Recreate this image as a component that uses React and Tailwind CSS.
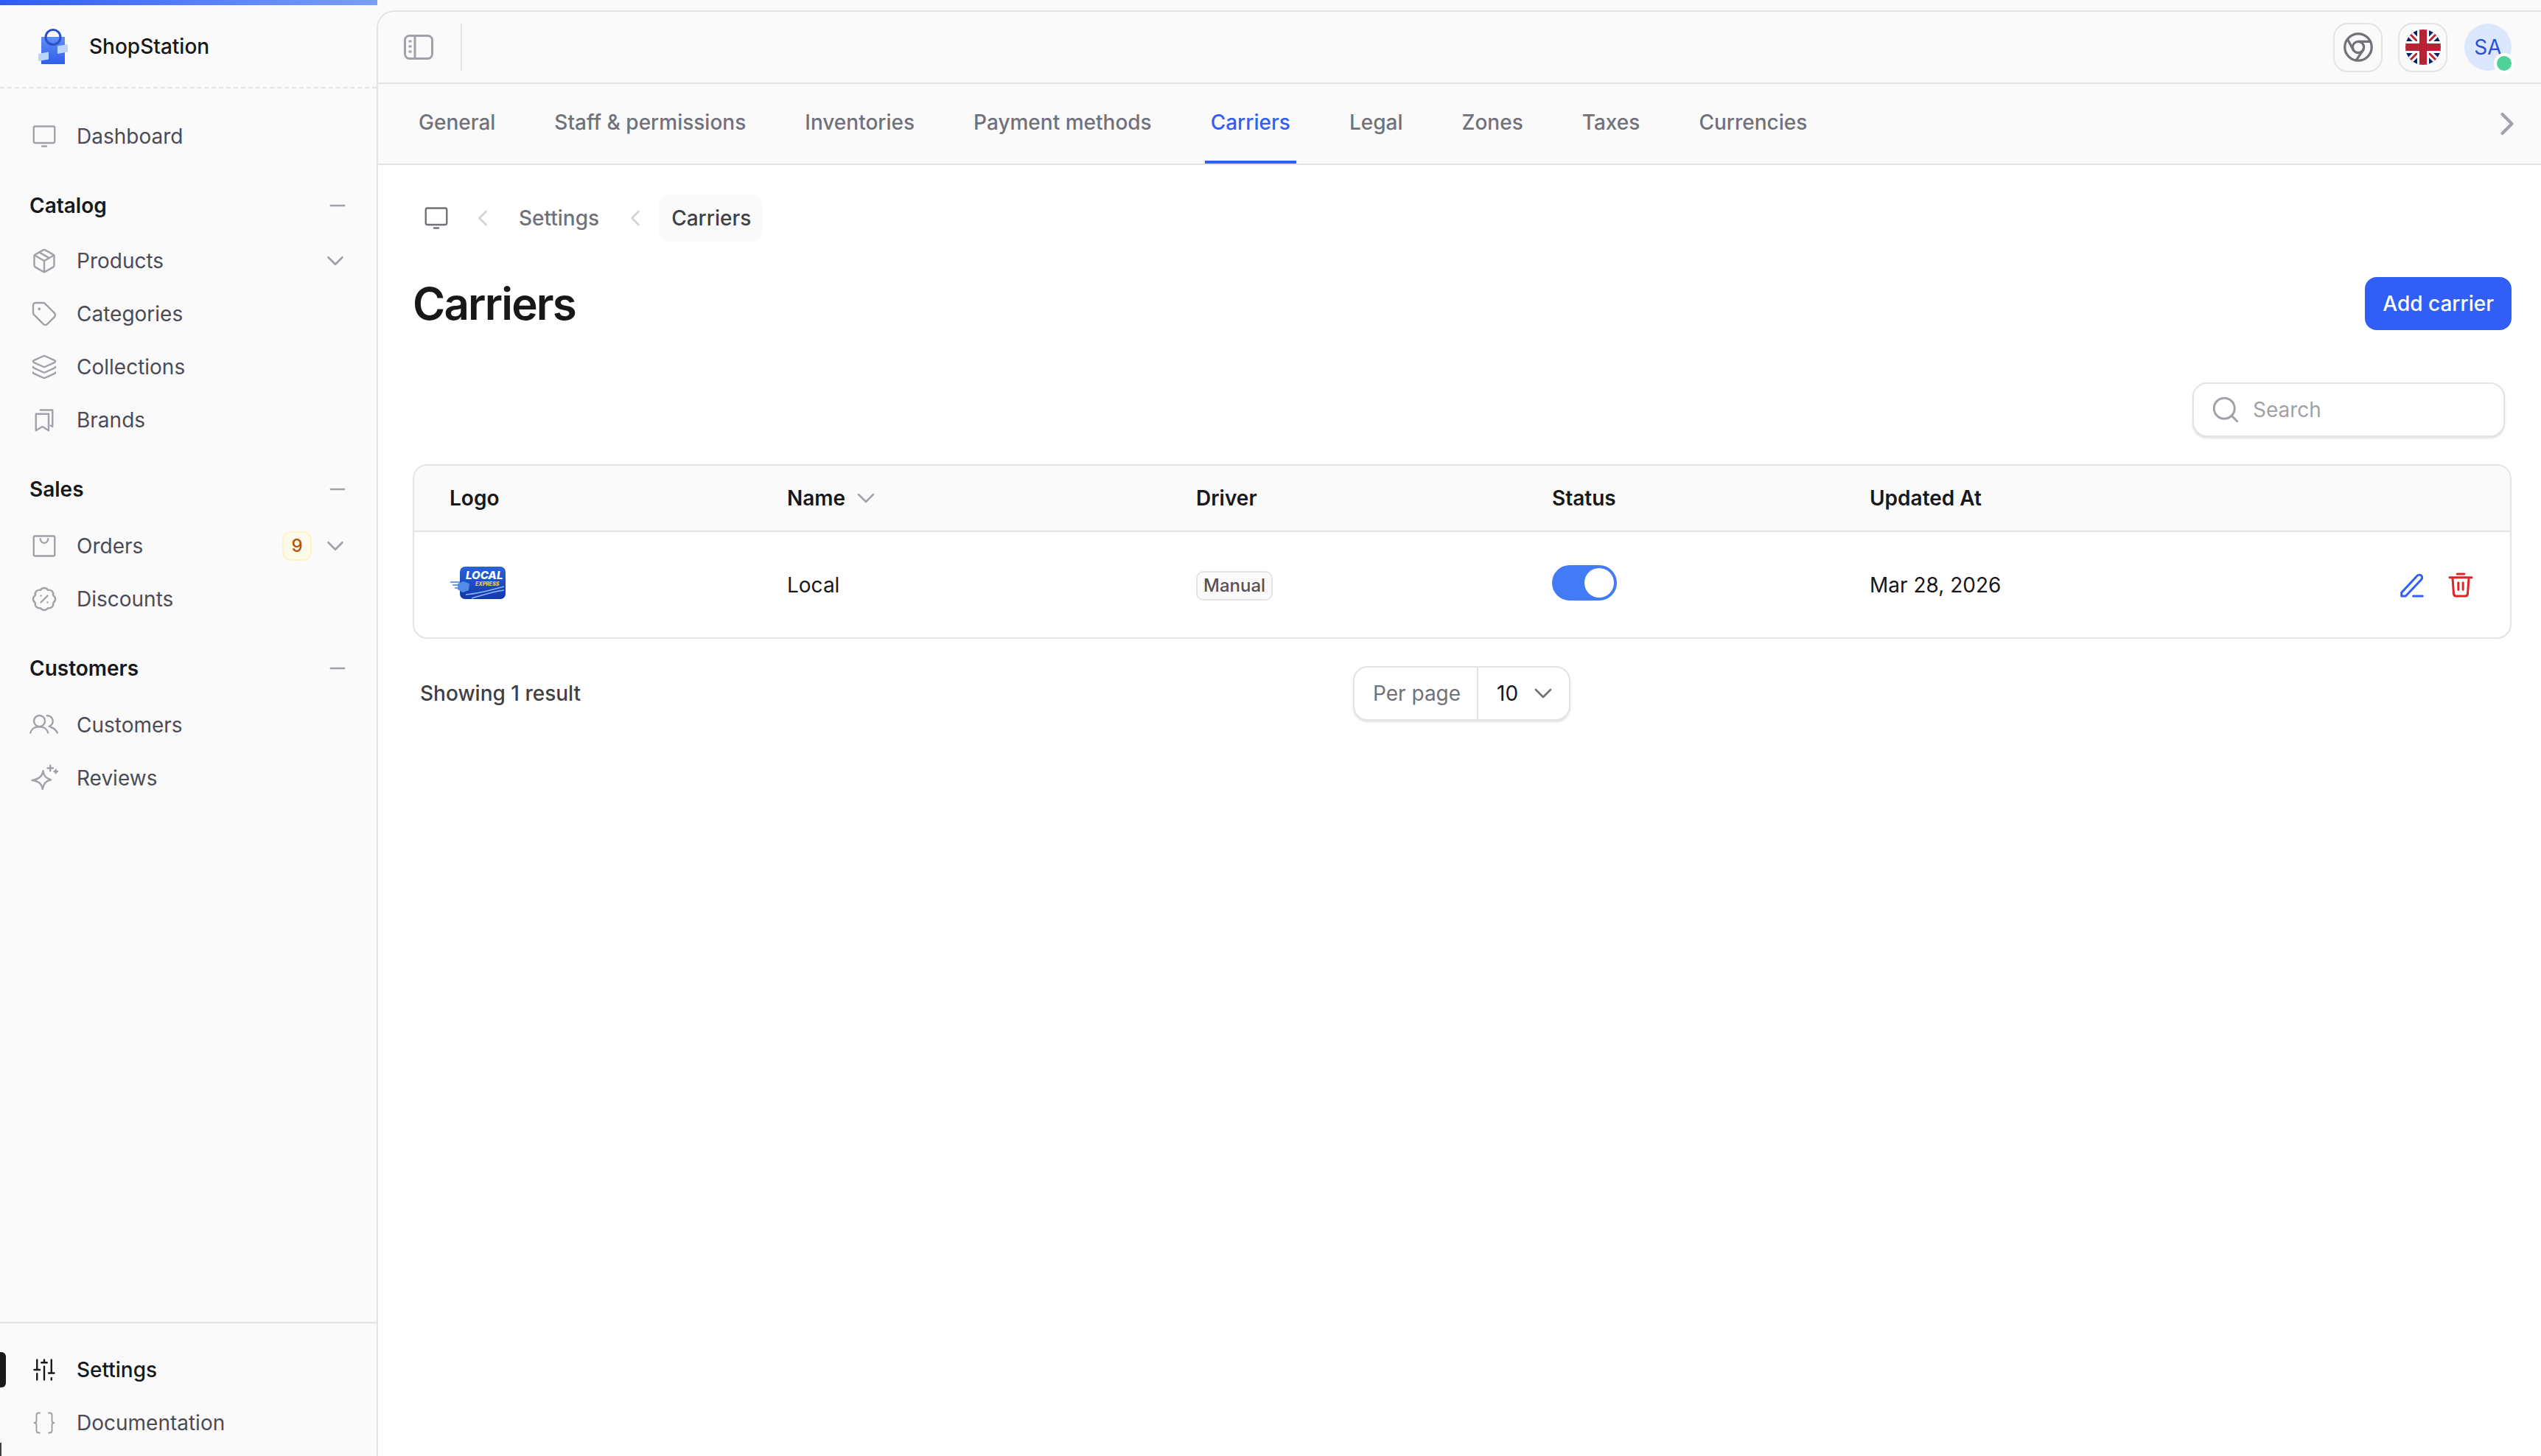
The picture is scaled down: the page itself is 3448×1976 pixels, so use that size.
import { ChevronDown, ChevronLeft, ChevronRight, Minus, Package, Tag, Layers, BadgePercent, Braces, Search } from 'lucide-react';

const TABS = ['General', 'Staff & permissions', 'Inventories', 'Payment methods', 'Carriers', 'Legal', 'Zones', 'Taxes', 'Currencies'];

function Svg({ className = 'w-[36px] h-[36px] text-[#a1a1aa]', width = 1.6, children }) {
  return (
    <svg viewBox="0 0 24 24" fill="none" stroke="currentColor" strokeWidth={width} strokeLinecap="round" strokeLinejoin="round" className={`shrink-0 overflow-visible ${className}`}>
      {children}
    </svg>
  );
}

const MonitorIcon = (props) => (
  <Svg {...props}>
    <rect x="2.5" y="3" width="19" height="15" rx="1.5" />
    <path d="M10 21h4" />
  </Svg>
);

const BookmarksIcon = (props) => (
  <Svg {...props}>
    <path d="M4.500 6.500h11.500v15l-5.700-3.500-5.800 3.500z" />
    <path d="M8.500 3h11v15l-1.800-1" />
  </Svg>
);

const BagIcon = (props) => (
  <Svg {...props}>
    <rect x="2.500" y="3" width="19" height="18" rx="1" />
    <path d="M8.500 5.500c.5 5 6.500 5 7 0" />
  </Svg>
);

const PeopleIcon = (props) => (
  <Svg {...props}>
    <circle cx="7.700" cy="8.300" r="5" />
    <path d="M-.5 19c.8-3.500 4-5.500 8-5.500s7.200 2 8 5.500" />
    <path d="M14.500 3.500a5 5 0 0 1 2 9.700" />
    <path d="M18 14c2.500.5 4.500 2.500 6 5" />
  </Svg>
);

const SparkIcon = (props) => (
  <Svg {...props}>
    <path d="M11 5.500c.6 4.500 2.400 6.500 7 8-4.600 1.200-6.400 3.200-7.500 8.500-.8-5-3.200-7-9.500-8 6.300-1.200 9.200-3.500 10-8.500z" />
    <path d="M17.500.5v5M15 3h5M22.500 4.500v3M21 6h3" />
  </Svg>
);

const SlidersIcon = (props) => (
  <Svg {...props}>
    <path d="M5.500 3v9M3 12h5M5.500 15.500V21M12 3v2.500M9.500 5.500h5M12 9v12M18.500 3v12M16 15h5M18.500 19.500V21" />
  </Svg>
);

function NavItem({ icon, label, badge, chevron, active }) {
  return (
    <div className={`relative flex items-center h-[72px] pl-[42px] pr-[37px] gap-[26px] text-[28px] ${active ? 'font-medium text-[#18181b]' : 'font-normal text-[#4b4b55]'}`}>
      {active && <span className="absolute left-0 top-[12px] w-[8px] h-[48px] rounded-r-[6px] bg-[#18181b]" />}
      {icon}
      <span className="flex-1">{label}</span>
      {badge && (
        <span className="w-[40px] h-[40px] -mr-[13px] flex items-center justify-center rounded-[12px] border-2 border-[#fef3c7] bg-[#fffbeb] text-[24px] font-medium text-[#b45309]">{badge}</span>
      )}
      {chevron && <ChevronDown className="w-[38px] h-[38px] text-[#a1a1aa]" strokeWidth={1.7} />}
    </div>
  );
}

function NavSection({ title, gap = 'mt-[19px]', children }) {
  return (
    <div className="mt-[36px]">
      <div className="flex items-center justify-between h-[44px] pl-[40px] pr-[37px] text-[28px] font-semibold text-[#18181b]">
        {title}
        <Minus className="w-[32px] h-[32px] text-[#a1a1aa]" strokeWidth={1.7} />
      </div>
      <div className={gap}>{children}</div>
    </div>
  );
}

function Sidebar() {
  const ic = 'w-[36px] h-[36px] text-[#a1a1aa]';
  return (
    <aside className="w-[511px] shrink-0 flex flex-col h-full">
      <div className="w-[512px] h-[7px] shrink-0 bg-gradient-to-r from-[#2f5cf0] to-[#7c9dfb]" />
      <div className="h-[113px] shrink-0 flex items-center gap-[27px] pl-[50px] border-b-2 border-dashed border-[#e4e4e7]">
        <svg viewBox="50 38 44 52" className="w-[44px] h-[52px] shrink-0">
          <defs>
            <linearGradient id="bag" x1="0" y1="0" x2="0" y2="1">
              <stop offset="0" stopColor="#5f90f8" />
              <stop offset="1" stopColor="#2e5de8" />
            </linearGradient>
          </defs>
          <rect x="56" y="51" width="32" height="37" fill="url(#bag)" />
          <circle cx="72" cy="51.500" r="10" fill="none" stroke="#2f4fc9" strokeWidth="3" />
          <path d="M78 63.500l14-2.500v10.500l-14 2.500z" fill="#bcd3fb" />
          <path d="M52 74l14-2.500v10l-14 2.500z" fill="#bcd3fb" />
        </svg>
        <span className="text-[28px] font-medium text-[#18181b]">ShopStation</span>
      </div>
      <div className="mt-[29px]">
        <NavItem icon={<MonitorIcon />} label="Dashboard" />
      </div>
      <NavSection title="Catalog" gap="mt-[17px]">
        <NavItem icon={<Package className={ic} strokeWidth={1.6} />} label="Products" chevron />
        <NavItem icon={<Tag className={ic} strokeWidth={1.6} />} label="Categories" />
        <NavItem icon={<Layers className={ic} strokeWidth={1.6} />} label="Collections" />
        <NavItem icon={<BookmarksIcon />} label="Brands" />
      </NavSection>
      <NavSection title="Sales">
        <NavItem icon={<BagIcon />} label="Orders" badge="9" chevron />
        <NavItem icon={<BadgePercent className={ic} strokeWidth={1.6} />} label="Discounts" />
      </NavSection>
      <NavSection title="Customers">
        <NavItem icon={<PeopleIcon />} label="Customers" />
        <NavItem icon={<SparkIcon />} label="Reviews" />
      </NavSection>
      <div className="mt-auto border-t-2 border-[#e4e4e7] pt-[27px] pb-[9px]">
        <NavItem active icon={<SlidersIcon className="w-[36px] h-[36px] text-[#18181b]" />} label="Settings" />
        <NavItem icon={<Braces className={ic} strokeWidth={1.3} />} label="Documentation" />
      </div>
    </aside>
  );
}

function FlagIcon() {
  return (
    <svg viewBox="0 0 48 48" className="w-[48px] h-[48px] rounded-full">
      <rect width="48" height="48" fill="#012169" />
      <path d="M0 0L48 48M48 0L0 48" stroke="#fff" strokeWidth="9" />
      <path d="M0 0L48 48M48 0L0 48" stroke="#b92234" strokeWidth="3" />
      <path d="M24 0V48M0 24H48" stroke="#fff" strokeWidth="16" />
      <path d="M24 0V48M0 24H48" stroke="#b92234" strokeWidth="10" />
    </svg>
  );
}

function Topbar() {
  return (
    <div className="h-[98px] shrink-0 flex items-center bg-[#fafafb] border-b-2 border-[#e4e4e7] pl-[35px] pr-[40px]">
      <svg viewBox="0 0 40 34" fill="none" className="w-[40px] h-[34px] text-[#a1a1aa]" stroke="currentColor" strokeWidth="3">
        <rect x="1.500" y="1.500" width="37" height="31" rx="6" />
        <path d="M15 1.500v31" />
        <path d="M6.500 9h4M6.500 16h4M6.500 23h4" />
      </svg>
      <div className="ml-[37px] w-[2px] h-[64px] bg-[#e4e4e7]" />
      <div className="ml-auto flex items-center gap-[21px]">
        <div className="w-[67px] h-[67px] flex items-center justify-center rounded-[20px] border-2 border-[#e4e4e7]">
          <Svg className="w-[46px] h-[46px] text-[#71717a]" width={1.7}>
            <circle cx="12" cy="12" r="9.500" />
            <circle cx="12" cy="12" r="4" />
            <path d="M20.500 8H12M4.500 6.500L8.500 14M10.500 21.300L15.500 14" />
          </Svg>
        </div>
        <div className="w-[67px] h-[67px] flex items-center justify-center rounded-[20px] border-2 border-[#e4e4e7]">
          <FlagIcon />
        </div>
        <div className="relative w-[64px] h-[64px] ml-[2px] flex items-center justify-center rounded-full bg-[#dbe7fd] text-[28px] text-[#2b4fd9]">
          SA
          <span className="absolute -right-[4px] -bottom-[4px] w-[28px] h-[28px] rounded-full border-4 border-white bg-[#4fd19a]" />
        </div>
      </div>
    </div>
  );
}

function Tabs() {
  return (
    <div className="h-[110px] shrink-0 flex items-stretch border-b-2 border-[#e4e4e7] pl-[47px] pr-[36px]">
      <div className="flex gap-[64px]">
        {TABS.map((t) => (
          <div
            key={t}
            className={`flex items-center px-[8px] border-b-4 text-[28px] font-medium ${t === 'Carriers' ? 'border-b-[#315ff5] text-[#315ff5]' : 'border-b-transparent text-[#71717a]'}`}
          >
            {t}
          </div>
        ))}
      </div>
      <ChevronRight className="ml-auto self-center w-[52px] h-[52px] -mr-[16px] text-[#a1a1aa]" strokeWidth={1.9} />
    </div>
  );
}

function CarrierLogo() {
  return (
    <svg viewBox="0 0 78 46" className="w-[78px] h-[46px]">
      <defs>
        <linearGradient id="lg" x1="0" y1="0" x2="0" y2="1">
          <stop offset="0" stopColor="#2a62d8" />
          <stop offset="1" stopColor="#1238ad" />
        </linearGradient>
      </defs>
      <path d="M1 22h16M4 26h14M7 30h12" stroke="#6d9bf0" strokeWidth="2" />
      <rect x="14" y="1" width="62" height="44" rx="7" fill="url(#lg)" />
      <text x="22" y="18" fill="#fff" fontSize="15" fontWeight="800" fontStyle="italic" fontFamily="Inter, sans-serif">LOCAL</text>
      <text x="35" y="27" fill="#f0cd4a" fontSize="7" fontWeight="800" fontStyle="italic" fontFamily="Inter, sans-serif">EXPRESS</text>
      <path d="M11 24l8-3 8 3-1 9-8 3-7-4z" fill="#4f8de8" />
      <path d="M22 39c14-1 30-5 52-11M30 44c14-4 28-9 44-11" stroke="#8fb6f4" strokeWidth="1.500" fill="none" />
    </svg>
  );
}

function CarriersTable() {
  const cols = 'grid grid-cols-[458px_555px_483px_431px_1fr] pl-[48px] items-center';
  return (
    <div className="mt-[37px] rounded-[20px] border-2 border-[#e4e4e7] overflow-hidden">
      <div className={`${cols} h-[90px] bg-[#fafafa] border-b-2 border-[#e4e4e7] text-[28px] font-semibold text-[#18181b]`}>
        <span>Logo</span>
        <span className="flex items-center gap-[8px]">
          Name <ChevronDown className="w-[40px] h-[40px] text-[#a1a1aa]" strokeWidth={1.5} />
        </span>
        <span>Driver</span>
        <span>Status</span>
        <span>Updated At</span>
      </div>
      <div className={`${cols} h-[143px] text-[28px] text-[#18181b]`}>
        <div className="-mt-[6px]"><CarrierLogo /></div>
        <span>Local</span>
        <span>
          <span className="inline-flex items-center h-[40px] px-[8px] rounded-[10px] border-2 border-[#e4e4e7] bg-[#fafafa] text-[24px] font-medium text-[#52525b]">Manual</span>
        </span>
        <span className="flex -mt-[6px]">
          <span className="flex justify-end items-center w-[88px] h-[48px] pr-[4px] rounded-full bg-[#437bf7]">
            <span className="w-[40px] h-[40px] rounded-full bg-white" />
          </span>
        </span>
        <div className="flex items-center justify-between pr-[48px]">
          <span>Mar 28, 2026</span>
          <span className="flex items-center gap-[28px]">
            <Svg className="w-[38px] h-[38px] text-[#315ff5]" width={1.9}>
              <path d="M3 18.500L16.500 4a2.400 2.400 0 0 1 3.500 3.300L6.500 21.500H3z" />
              <path d="M13 21.500h8" />
            </Svg>
            <Svg className="w-[38px] h-[38px] text-[#dc2626]" width={1.9}>
              <path d="M2.500 5.500h19M9 2.500h6M5 5.500l1 14a2.200 2.200 0 0 0 2.200 2h7.600a2.200 2.200 0 0 0 2.200-2l1-14M10 10v6M14 10v6" />
            </Svg>
          </span>
        </div>
      </div>
    </div>
  );
}

function Content() {
  return (
    <div className="flex-1 bg-white pl-[47px] pr-[40px] pt-[40px]">
      <div className="flex items-center h-[64px] text-[28px] font-medium">
        <MonitorIcon className="w-[36px] h-[36px] ml-[14px] text-[#71717a]" width={1.6} />
        <ChevronLeft className="w-[36px] h-[36px] ml-[27px] text-[#d4d4d8]" strokeWidth={1.8} />
        <span className="ml-[31px] text-[#71717a]">Settings</span>
        <ChevronLeft className="w-[36px] h-[36px] ml-[31px] text-[#d4d4d8]" strokeWidth={1.8} />
        <span className="ml-[15px] h-[64px] flex items-center px-[16px] rounded-[12px] bg-[#fafafa] text-[#3f3f46]">Carriers</span>
      </div>
      <div className="mt-[48px] flex items-center justify-between h-[72px]">
        <h1 className="text-[60px] font-semibold text-[#18181b] tracking-[-0.03em]">Carriers</h1>
        <button className="h-[72px] px-[24px] rounded-[16px] bg-[#315ff5] text-[28px] font-medium text-white">Add carrier</button>
      </div>
      <div className="mt-[71px] flex justify-end pr-[9px]">
        <div className="w-[424px] h-[74px] flex items-center gap-[16px] pl-[22px] rounded-[20px] border-2 border-[#e4e4e7] bg-white shadow-[0_2px_3px_rgba(0,0,0,0.12)]">
          <Search className="w-[42px] h-[42px] text-[#a1a1aa]" strokeWidth={1.7} />
          <span className="text-[28px] text-[#a1a1aa]">Search</span>
        </div>
      </div>
      <CarriersTable />
      <div className="mt-[37px] flex items-center h-[74px] pl-[10px]">
        <span className="w-[1266px] shrink-0 text-[28px] font-medium text-[#3f3f46]">Showing 1 result</span>
        <div className="flex items-center w-[295px] h-[74px] rounded-[20px] border-2 border-[#e4e4e7] bg-white shadow-[0_2px_3px_rgba(0,0,0,0.12)] text-[28px]">
          <span className="w-[168px] h-full flex items-center pl-[25px] border-r-2 border-[#e4e4e7] text-[#71717a]">Per page</span>
          <span className="pl-[25px] text-[#18181b]">10</span>
          <ChevronDown className="ml-[14px] w-[40px] h-[40px] text-[#71717a]" strokeWidth={1.6} />
        </div>
      </div>
    </div>
  );
}

export default function App() {
  return (
    <div className="relative flex w-[3448px] h-[1976px] overflow-hidden bg-[#fafafb] font-['Inter',sans-serif]">
      <Sidebar />
      <main className="flex-1 min-w-0 pt-[14px] flex flex-col">
        <div className="flex-1 flex flex-col overflow-hidden border-l-2 border-t-2 border-[#e4e4e7] rounded-tl-[24px]">
          <Topbar />
          <Tabs />
          <Content />
        </div>
      </main>
      <span className="absolute left-0 bottom-0 w-[2px] h-[18px] bg-[#3f3f46]" />
    </div>
  );
}
